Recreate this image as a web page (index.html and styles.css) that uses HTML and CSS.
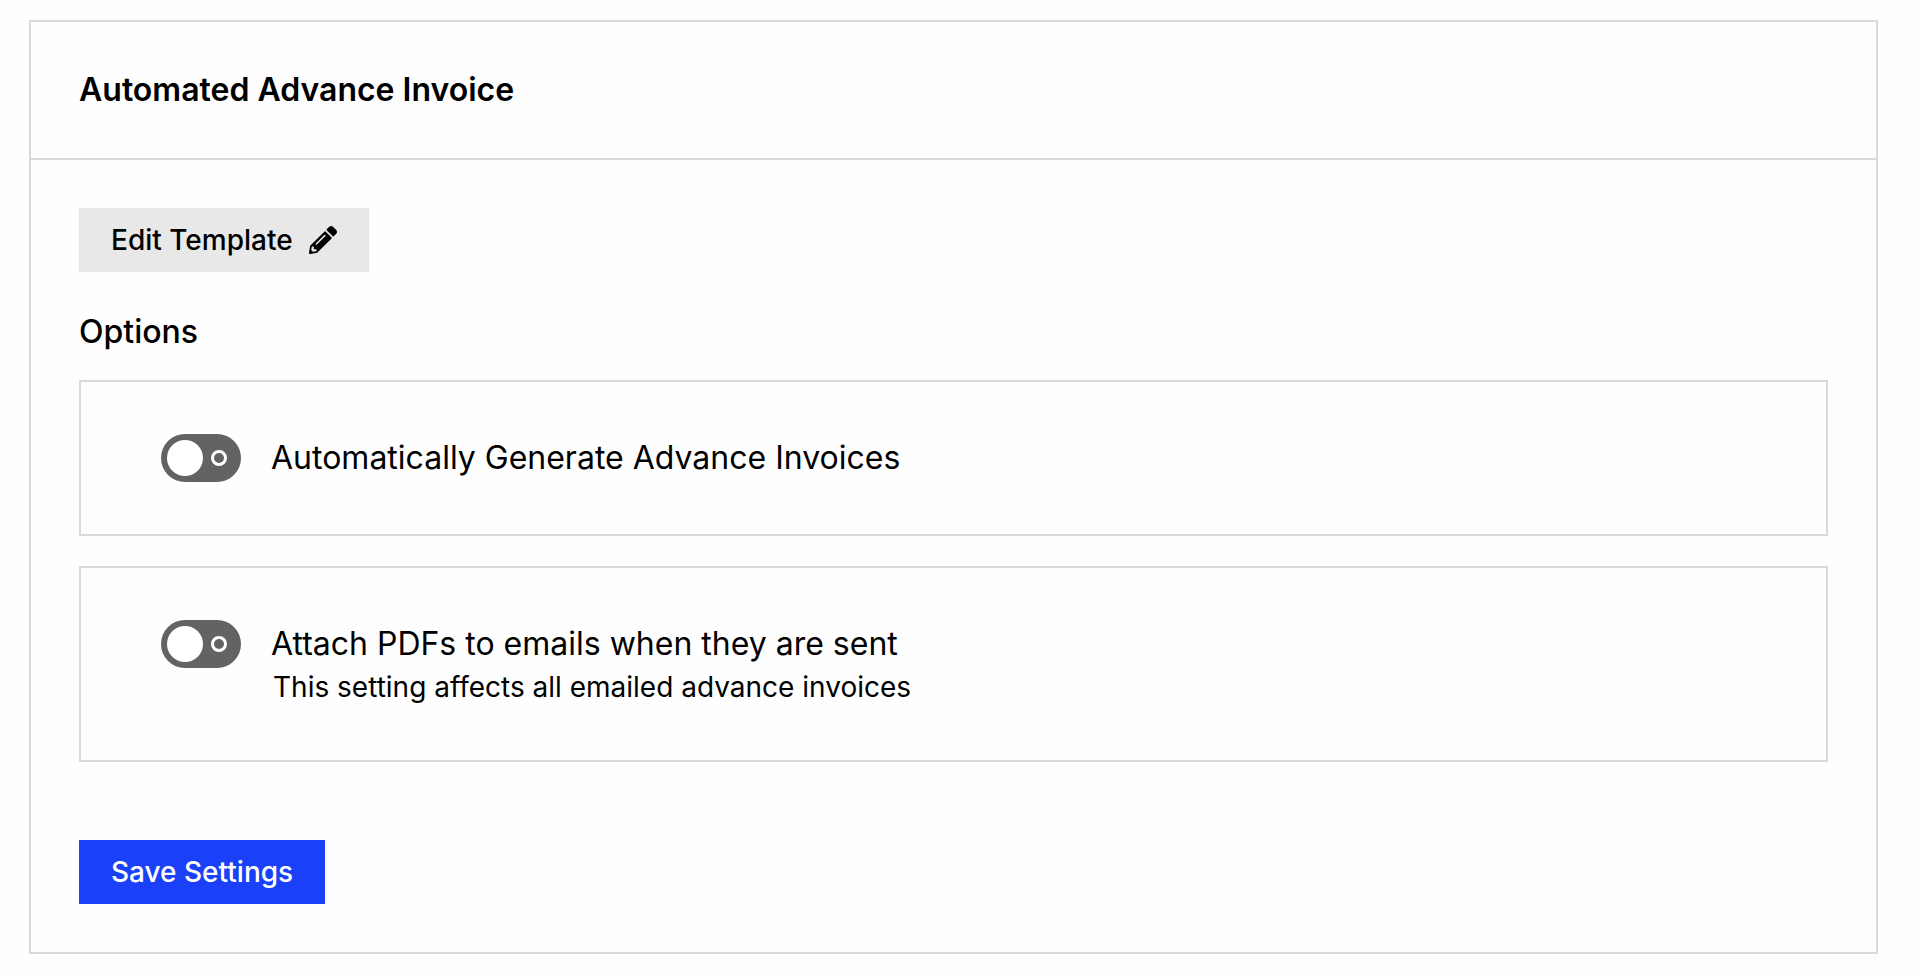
FILE: index.html
```html
<!DOCTYPE html>
<html lang="en">
<head>
    <meta charset="UTF-8">
    <meta name="viewport" content="width=device-width, initial-scale=1.0">
    <title>Automated Advance Invoice</title>
    <link rel="stylesheet" href="styles.css">
</head>
<body>
    <main>
        <section class="panel">
            <header class="panel-header">
                <h1>Automated Advance Invoice</h1>
            </header>
            <form class="panel-body">
                <button type="button" class="btn btn-light">
                    Edit Template
                    <svg class="icon" viewBox="0 0 512 512" aria-hidden="true">
                        <path d="M497.9 142.1l-46.1 46.1c-4.7 4.7-12.3 4.7-17 0l-111-111c-4.7-4.7-4.7-12.3 0-17l46.1-46.1c18.7-18.7 49.1-18.7 67.9 0l60.1 60.1c18.8 18.7 18.8 49.1 0 67.9zM284.2 99.8L21.6 362.4.4 483.9c-2.9 16.4 11.4 30.6 27.8 27.8l121.5-21.3 262.6-262.6c4.7-4.7 4.7-12.3 0-17l-111-111c-4.8-4.7-12.4-4.7-17.1 0zM124.1 339.9c-5.5-5.5-5.5-14.3 0-19.8l154-154c5.5-5.5 14.3-5.5 19.8 0s5.5 14.3 0 19.8l-154 154c-5.5 5.5-14.3 5.5-19.8 0zM88 424h48v36.3l-64.5 11.3-31.1-31.1L51.7 376H88v48z"/>
                    </svg>
                </button>

                <h2>Options</h2>

                <div class="option">
                    <input type="checkbox" class="toggle" id="autoGenerate" name="autoGenerate">
                    <label for="autoGenerate">Automatically Generate Advance Invoices</label>
                </div>

                <div class="option">
                    <input type="checkbox" class="toggle" id="attachPdf" name="attachPdf" aria-describedby="attachHelp">
                    <div class="option-text">
                        <label for="attachPdf">Attach PDFs to emails when they are sent</label>
                        <p class="help" id="attachHelp">This setting affects all emailed advance invoices</p>
                    </div>
                </div>

                <button type="submit" class="btn btn-primary">Save Settings</button>
            </form>
        </section>
    </main>
</body>
</html>
```
FILE: styles.css
```css
* {
    box-sizing: border-box;
}

body {
    margin: 0;
    background-color: #fefefe;
    color: #000;
    font-family: Inter, "Liberation Sans", sans-serif;
}

main {
    padding: 20px 42px 24px 29px;
}

.panel {
    border: 2px solid #d9d9d9;
}

.panel-header {
    padding: 48px;
    border-bottom: 2px solid #d9d9d9;
}

h1,
h2 {
    margin: 0;
    font-size: 32px;
    line-height: 40px;
}

h1 {
    font-weight: 600;
}

h2 {
    margin: 40px 0 28px;
    font-weight: 500;
}

.panel-body {
    display: flex;
    flex-direction: column;
    align-items: flex-start;
    padding: 48px;
}

.btn {
    display: flex;
    align-items: center;
    gap: 16px;
    height: 64px;
    padding: 0 32px;
    border: none;
    font-family: inherit;
    font-size: 28px;
    font-weight: 500;
    cursor: pointer;
}

.btn-light {
    background-color: #e8e8e8;
    color: #000;
}

.btn-primary {
    margin-top: 48px;
    background-color: #1a41f9;
    color: #fff;
}

.icon {
    width: 28px;
    height: 28px;
}

.option {
    display: flex;
    align-items: flex-start;
    gap: 30px;
    width: 100%;
    margin-bottom: 30px;
    padding: 52px 80px;
    border: 2px solid #d9d9d9;
    font-size: 32px;
    line-height: 48px;
}

/* Switch: knob on the left, small ring on the right */
.toggle {
    appearance: none;
    display: flex;
    flex-shrink: 0;
    align-items: center;
    justify-content: space-between;
    width: 80px;
    height: 48px;
    margin: 0;
    padding: 0 14px 0 6px;
    border-radius: 24px;
    background-color: #636363;
    cursor: pointer;
}

.toggle::before {
    content: "";
    width: 36px;
    height: 36px;
    border-radius: 50%;
    background-color: #fff;
}

.toggle::after {
    content: "";
    box-sizing: border-box;
    width: 16px;
    height: 16px;
    border: 3px solid #fff;
    border-radius: 50%;
}

.toggle:checked {
    flex-direction: row-reverse;
    padding: 0 6px 0 14px;
    background-color: #1a41f9;
}

.help {
    margin: 0 0 2px;
    padding-left: 2px;
    font-size: 28px;
    line-height: 38px;
}
```
